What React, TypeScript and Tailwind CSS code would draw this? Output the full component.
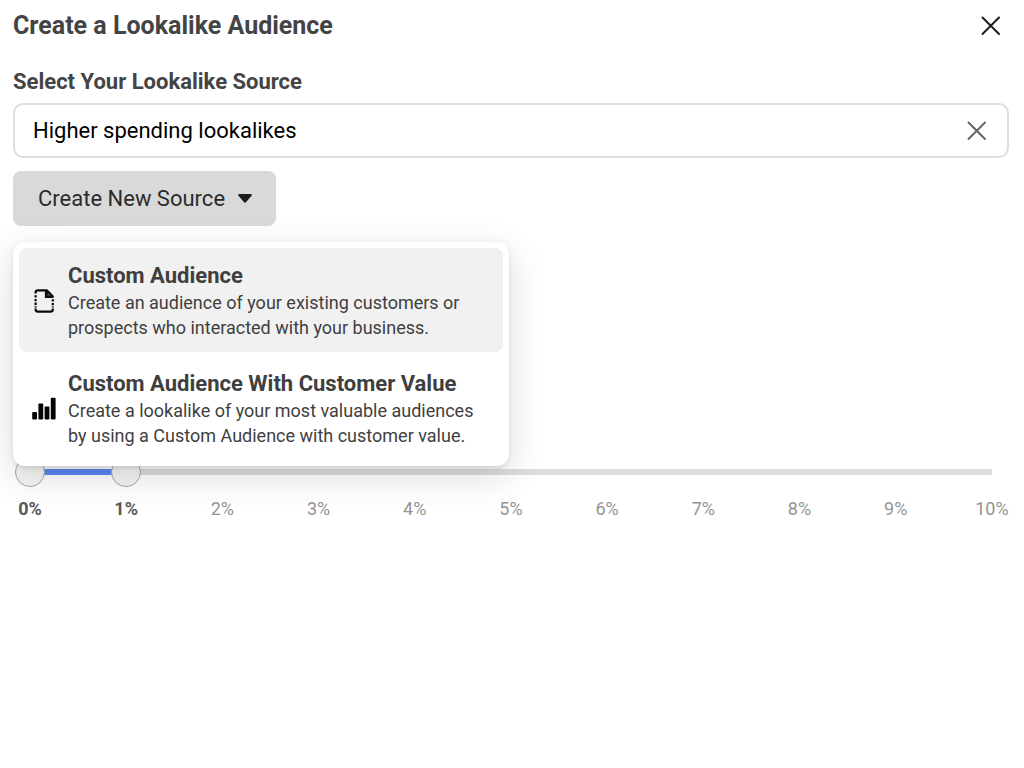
import { useState } from "react";

const CloseIcon = () => (
    <svg width="20" height="20" viewBox="0 0 20 20" fill="none" stroke="currentColor" strokeWidth="2" strokeLinecap="round" aria-hidden="true">
        <path d="M1.5 1.5l16.5 16.5M18 1.5l-16.5 16.5" />
    </svg>
);

const FileIcon = () => (
    <svg width="24" height="24" viewBox="0 0 24 24" fill="none" stroke="#0a0a0a" strokeWidth="2.2" aria-hidden="true">
        <path d="M3.6 4.5V3.6Q3.6 1.4 6 1.4H14.8L20.8 7.4V8.8" />
        <path d="M3.6 19.4V20.2Q3.6 22.6 6 22.6H18.4Q20.8 22.6 20.8 20.2V19.4" />
        <path d="M3.6 6.2V18.4M20.8 10.2V18.4" strokeDasharray="2.4 1.3" />
        <path d="M14 1.5V7.8H20.6" />
        <path d="M15.4 3.6V6.4H18.4Z" fill="#0a0a0a" strokeWidth="0.8" />
        <path d="M16.4 5.6h.9" stroke="#f1f1f1" strokeWidth="0.9" />
    </svg>
);

const BarsIcon = () => (
    <svg width="24" height="24" viewBox="0 0 24 24" fill="#050505" aria-hidden="true">
        <rect x="0.2" y="15" width="4.8" height="7.6" rx="1" />
        <rect x="6.4" y="6.4" width="4.8" height="16.2" rx="1" />
        <rect x="12.6" y="9.4" width="4.8" height="13.2" rx="1" />
        <rect x="18.8" y="0.8" width="4.8" height="21.8" rx="1" />
    </svg>
);

const options = [
    {
        title: "Custom Audience",
        details: "Create an audience of your existing customers or prospects who interacted with your business.",
        icon: <FileIcon />,
    },
    {
        title: "Custom Audience With Customer Value",
        details: "Create a lookalike of your most valuable audiences by using a Custom Audience with customer value.",
        icon: <BarsIcon />,
    },
];

const ticks = [0, 1, 2, 3, 4, 5, 6, 7, 8, 9, 10];

const thumbClass =
    "pointer-events-none absolute inset-0 h-[30px] w-full appearance-none bg-transparent [&::-webkit-slider-thumb]:pointer-events-auto [&::-webkit-slider-thumb]:size-[30px] [&::-webkit-slider-thumb]:appearance-none [&::-webkit-slider-thumb]:rounded-full [&::-webkit-slider-thumb]:border [&::-webkit-slider-thumb]:border-[#a5a5a5] [&::-webkit-slider-thumb]:bg-[#f5f5f5]";

const SourceMenu = () => {
    const [active, setActive] = useState(0);

    return (
        <div
            role="menu"
            className="absolute top-full left-0 z-10 mt-4 flex w-[496px] flex-col gap-1 rounded-xl bg-white p-1.5 shadow-[0_2px_4px_rgba(0,0,0,0.1),0_10px_36px_rgba(0,0,0,0.15)]"
        >
            {options.map((option, index) => (
                <button
                    key={option.title}
                    type="button"
                    role="menuitem"
                    onMouseEnter={() => setActive(index)}
                    className={`flex items-center gap-3 rounded-lg pt-3.5 pr-2 pb-3 pl-[13px] text-left text-[#3f3f3f] ${active === index ? "bg-[#f1f1f1]" : ""}`}
                >
                    <span className="shrink-0">{option.icon}</span>
                    <span className="block">
                        <span className="block text-[22px] leading-7 font-bold">{option.title}</span>
                        <span className="block text-lg leading-[25px]">{option.details}</span>
                    </span>
                </button>
            ))}
        </div>
    );
};

const AudienceSize = () => {
    const [from, setFrom] = useState(0);
    const [to, setTo] = useState(1);

    return (
        <div>
            <div className="relative mx-0.5 h-[30px] px-[15px] py-3">
                <div className="h-1.5 bg-[#dcdde0]">
                    <div className="h-full bg-[#5b87f0]" style={{ marginLeft: `${from * 10}%`, width: `${(to - from) * 10}%` }} />
                </div>
                <input
                    type="range"
                    aria-label="Smallest audience size"
                    min={0}
                    max={10}
                    value={from}
                    onChange={(e) => setFrom(Math.min(Number(e.target.value), to))}
                    className={thumbClass}
                />
                <input
                    type="range"
                    aria-label="Largest audience size"
                    min={0}
                    max={10}
                    value={to}
                    onChange={(e) => setTo(Math.max(Number(e.target.value), from))}
                    className={thumbClass}
                />
            </div>
            <div className="mt-2 flex justify-between text-lg leading-7">
                {ticks.map((tick) => (
                    <span
                        key={tick}
                        className={`flex w-[34px] justify-center ${tick === from || tick === to ? "font-bold text-[#5a5a5a]" : "text-[#949494]"}`}
                    >
                        {tick}%
                    </span>
                ))}
            </div>
        </div>
    );
};

const App: React.FC = () => {
    const [source, setSource] = useState("Higher spending lookalikes");

    return (
        <main className="bg-white pr-[15px] pl-[13px] pt-2 font-[Roboto,sans-serif]">
            <header className="flex items-center justify-between pr-2">
                <h1 className="text-[25px] leading-9 font-bold text-[#444]">Create a Lookalike Audience</h1>
                <button type="button" aria-label="Close" className="text-[#1c1c1c]">
                    <CloseIcon />
                </button>
            </header>

            <label htmlFor="source" className="mt-6 block text-[22px] leading-7 font-bold text-[#444]">
                Select Your Lookalike Source
            </label>
            <div className="mt-[7px] flex h-[55px] items-center rounded-[10px] border-2 border-[#dedede] pr-5 pl-[18px]">
                <input
                    id="source"
                    type="text"
                    value={source}
                    onChange={(e) => setSource(e.target.value)}
                    className="min-w-0 flex-1 text-[22px] leading-7 text-black outline-none"
                />
                <button type="button" aria-label="Clear source" onClick={() => setSource("")} className="text-[#62656c]">
                    <CloseIcon />
                </button>
            </div>

            <div className="relative mt-[13px] w-fit">
                <button
                    type="button"
                    aria-haspopup="menu"
                    aria-expanded="true"
                    className="flex h-[55px] items-center gap-[13px] rounded-lg bg-[#d9d9d9] pr-6 pl-[25px] text-[22px] leading-7 text-[#2b2b2b]"
                >
                    Create New Source
                    <svg width="14" height="9" viewBox="0 0 14 9" fill="#1c1c1c" aria-hidden="true">
                        <path d="M1 0H13Q14.4 .4 13.5 1.8L8.2 8Q7 9.4 5.8 8L.5 1.8Q-.4 .4 1 0Z" />
                    </svg>
                </button>
                <SourceMenu />
            </div>

            <section className="mt-[231px]">
                <AudienceSize />
            </section>
        </main>
    );
};

export default App;
